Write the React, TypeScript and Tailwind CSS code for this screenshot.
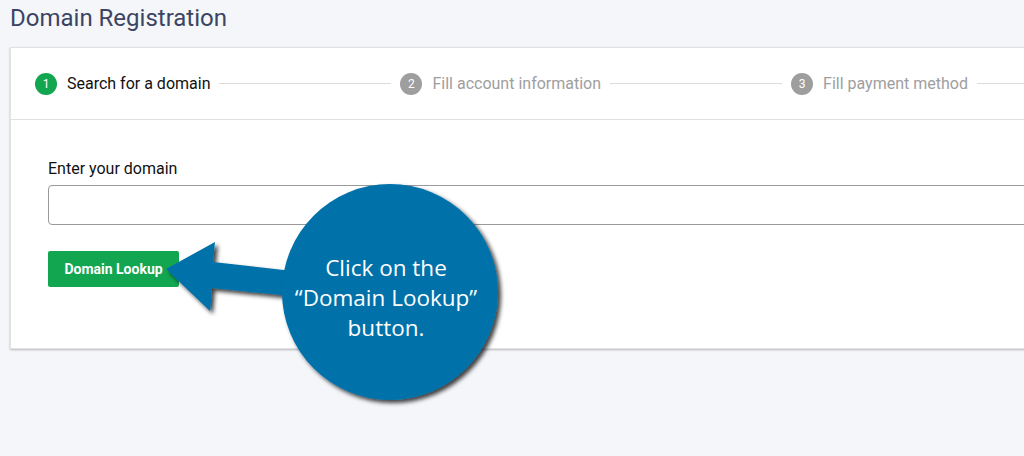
import React from "react";

const steps = [
  { n: 1, label: "Search for a domain", active: true },
  { n: 2, label: "Fill account information", active: false },
  { n: 3, label: "Fill payment method", active: false },
];

function Callout() {
  return (
    <>
      <svg
        className="absolute inset-0 pointer-events-none"
        width={1024}
        height={456}
        viewBox="0 0 1024 456"
      >
        <defs>
          <filter id="shadow" x="-20%" y="-20%" width="140%" height="140%">
            <feDropShadow dx="3" dy="3" stdDeviation="2" floodColor="#000" floodOpacity="0.75" />
          </filter>
        </defs>
        <polygon
          points="166,269 215,242 213,262 310,273 310,298 212,288 210,311"
          fill="#0071a9"
          filter="url(#shadow)"
        />
        <circle cx="390" cy="292" r="108" fill="#0071a9" filter="url(#shadow)" />
      </svg>
      <div className="absolute left-[276px] top-[253px] w-[220px] text-center text-white text-[22.5px] leading-[30px] font-['Open_Sans',sans-serif]">
        <div>Click on the</div>
        <div>“Domain Lookup”</div>
        <div>button.</div>
      </div>
    </>
  );
}

export default function App() {
  return (
    <div className="relative w-[1024px] h-[456px] overflow-hidden bg-[#f5f6fa] font-['Roboto',sans-serif]">
      <div className="h-[47px] pl-[10px] pt-[5px] text-[24px] leading-[27px] text-[#3b4563] whitespace-nowrap">
        Domain Registration
      </div>

      <div className="ml-[10px] w-[1100px] bg-white border border-[#e2e2e2] shadow-[0_1px_2px_rgba(0,0,0,0.25)]">
        {/* stepper */}
        <div className="h-[72px] border-b border-[#e0e0e0] pl-[24px] flex items-center overflow-hidden">
          {steps.map((s) => (
            <div key={s.n} className="flex items-center shrink-0">
              <div
                className={`shrink-0 w-[22px] h-[22px] rounded-full flex items-center justify-center text-[12px] text-white ${
                  s.active ? "bg-[#12a650]" : "bg-[#9e9e9e]"
                }`}
              >
                {s.n}
              </div>
              <span
                className={`ml-[10px] text-[16px] whitespace-nowrap ${
                  s.active ? "text-[#111]" : "text-[#9e9e9e]"
                }`}
              >
                {s.label}
              </span>
              <div className="shrink-0 mx-[9px] w-[172px] h-px bg-[#dcdcdc]" />
            </div>
          ))}
        </div>

        {/* form */}
        <div className="pl-[37px] pt-[39px] pb-[61px]">
          <div className="text-[16px] leading-[20px] text-[#111]">Enter your domain</div>
          <input
            type="text"
            className="mt-[6px] block w-[1040px] h-[40px] rounded-[4px] border border-[#9a9a9a] bg-white"
          />
          <button className="mt-[26px] w-[131px] h-[36px] rounded-[2px] bg-[#12a650] text-white text-[14px] font-bold">
            Domain Lookup
          </button>
        </div>
      </div>

      <Callout />
    </div>
  );
}
